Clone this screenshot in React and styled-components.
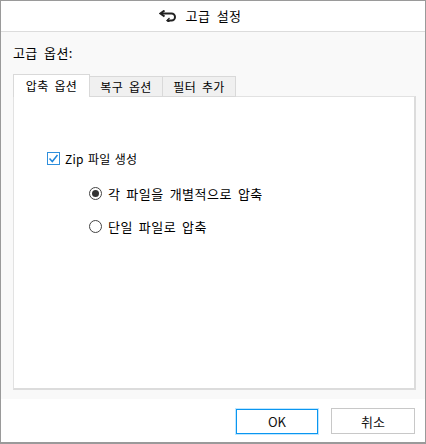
import styled, { createGlobalStyle } from "styled-components";

const Global = createGlobalStyle`
  html, body { margin: 0; padding: 0; background: #fff; }
  body { font-family: "Noto Sans CJK KR", "Liberation Sans", sans-serif; color: #000; }
`;

const Dialog = styled.div`
  width: 426px;
  height: 444px;
  box-sizing: border-box;
  border: 1px solid #9a9a9a;
  border-bottom-width: 2px;
  display: flex;
  flex-direction: column;
  background: #fff;
`;

const Header = styled.div`
  height: 31px;
  flex: none;
  box-sizing: border-box;
  display: flex;
  align-items: center;
  justify-content: center;
  gap: 10px;
  border-bottom: 1px solid #dcdcdc;
  font-size: 13px;
  letter-spacing: 0.4px;
  word-spacing: 3px;
  padding: 0 26px 1px 0;
`;

const Body = styled.div`
  height: 367px;
  flex: none;
  box-sizing: border-box;
  background: #f9f9f9;
  padding: 11px 9px 9px 12px;
  display: flex;
  flex-direction: column;
`;

const SectionLabel = styled.div`
  font-size: 13px;
  letter-spacing: 0.4px;
  word-spacing: 3px;
  line-height: 20px;
  margin-bottom: 11px;
`;

const Tabs = styled.div`
  display: flex;
  align-items: flex-end;
  height: 23px;
  flex: none;
  position: relative;
  z-index: 1;
  margin-bottom: -1px;
`;

const Tab = styled.div`
  box-sizing: border-box;
  display: flex;
  align-items: center;
  justify-content: center;
  font-size: 12px;
  letter-spacing: 0.3px;
  word-spacing: 3px;
  width: ${(p) => (p.$active ? "77px" : "73px")};
  height: ${(p) => (p.$active ? "23px" : "21px")};
  padding-bottom: ${(p) => (p.$active ? "1px" : "0")};
  background: ${(p) => (p.$active ? "#fff" : "#f0f0f0")};
  border: 1px solid #d9d9d9;
  border-bottom: ${(p) => (p.$active ? "none" : "1px solid #d9d9d9")};
  border-left: ${(p) => (p.$active ? "1px solid #d9d9d9" : "none")};
`;

const Panel = styled.div`
  flex: 1;
  box-sizing: border-box;
  background: #fff;
  border: 1px solid #e2e2e2;
  border-right: 2px solid #dcdcdc;
  border-bottom: 2px solid #dcdcdc;
  padding: 52px 0 0 33px;
  display: flex;
  flex-direction: column;
`;

const Row = styled.label`
  display: flex;
  align-items: center;
  height: 18px;
  font-size: ${(p) => (p.$radio ? "13px" : "12px")};
  letter-spacing: ${(p) => (p.$radio ? "0.5px" : "0.2px")};
  word-spacing: ${(p) => (p.$radio ? "2.5px" : "1.5px")};
  gap: ${(p) => (p.$radio ? "6px" : "5px")};
  margin-left: ${(p) => (p.$radio ? "42px" : "0")};
  margin-top: ${(p) => p.$top || 0}px;
`;

const Check = styled.span`
  width: 13px;
  height: 13px;
  box-sizing: border-box;
  border: 1px solid #2f8fdc;
  background: #fff;
  display: flex;
  align-items: center;
  justify-content: center;
`;

const Radio = styled.span`
  width: 13px;
  height: 13px;
  box-sizing: border-box;
  border: 1px solid #444;
  border-radius: 50%;
  background: #fff;
  display: flex;
  align-items: center;
  justify-content: center;
  &::after {
    content: "";
    display: ${(p) => (p.$on ? "block" : "none")};
    width: 7px;
    height: 7px;
    border-radius: 50%;
    background: #333;
  }
`;

const Footer = styled.div`
  flex: 1;
  display: flex;
  justify-content: flex-end;
  align-items: flex-start;
  gap: 13px;
  padding: 9px 10px 0 0;
`;

const Button = styled.button`
  width: ${(p) => (p.$primary ? "82px" : "84px")};
  height: ${(p) => (p.$primary ? "25px" : "26px")};
  box-sizing: border-box;
  padding: 0;
  background: #fff;
  font-family: inherit;
  font-size: 13px;
  color: #111;
  border: ${(p) => (p.$primary ? "1px solid #0a96f0" : "1px solid #c8c8c8")};
  box-shadow: ${(p) => (p.$primary ? "0 0 0 1px #bfe6ff" : "none")};
  margin-top: ${(p) => (p.$primary ? "1px" : "0")};
`;

const BackIcon = () => (
  <svg width="17" height="12" viewBox="0 0 17 12" fill="none" stroke="#222" strokeWidth="2">
    <path d="M2 3.5H12.5a3.5 3.5 0 0 1 0 7H8" />
    <path d="M5.5 0.5L1.5 3.5L5.5 6.5" />
    <path d="M10.5 8L8 10.5L10.5 12" strokeWidth="1.3" />
  </svg>
);

export default function App() {
  return (
    <>
      <Global />
      <Dialog>
        <Header>
          <BackIcon />
          <span>고급 설정</span>
        </Header>
        <Body>
          <SectionLabel>고급 옵션:</SectionLabel>
          <Tabs>
            <Tab $active>압축 옵션</Tab>
            <Tab>복구 옵션</Tab>
            <Tab>필터 추가</Tab>
          </Tabs>
          <Panel>
            <Row>
              <Check>
                <svg width="11" height="11" viewBox="0 0 11 11" fill="none" stroke="#1f86da" strokeWidth="1.5">
                  <path d="M1.5 5.5L4.3 8.5L9.5 2" />
                </svg>
              </Check>
              Zip 파일 생성
            </Row>
            <Row $radio $top={17}>
              <Radio $on />각 파일을 개별적으로 압축
            </Row>
            <Row $radio $top={15}>
              <Radio />단일 파일로 압축
            </Row>
          </Panel>
        </Body>
        <Footer>
          <Button $primary>OK</Button>
          <Button>취소</Button>
        </Footer>
      </Dialog>
    </>
  );
}
